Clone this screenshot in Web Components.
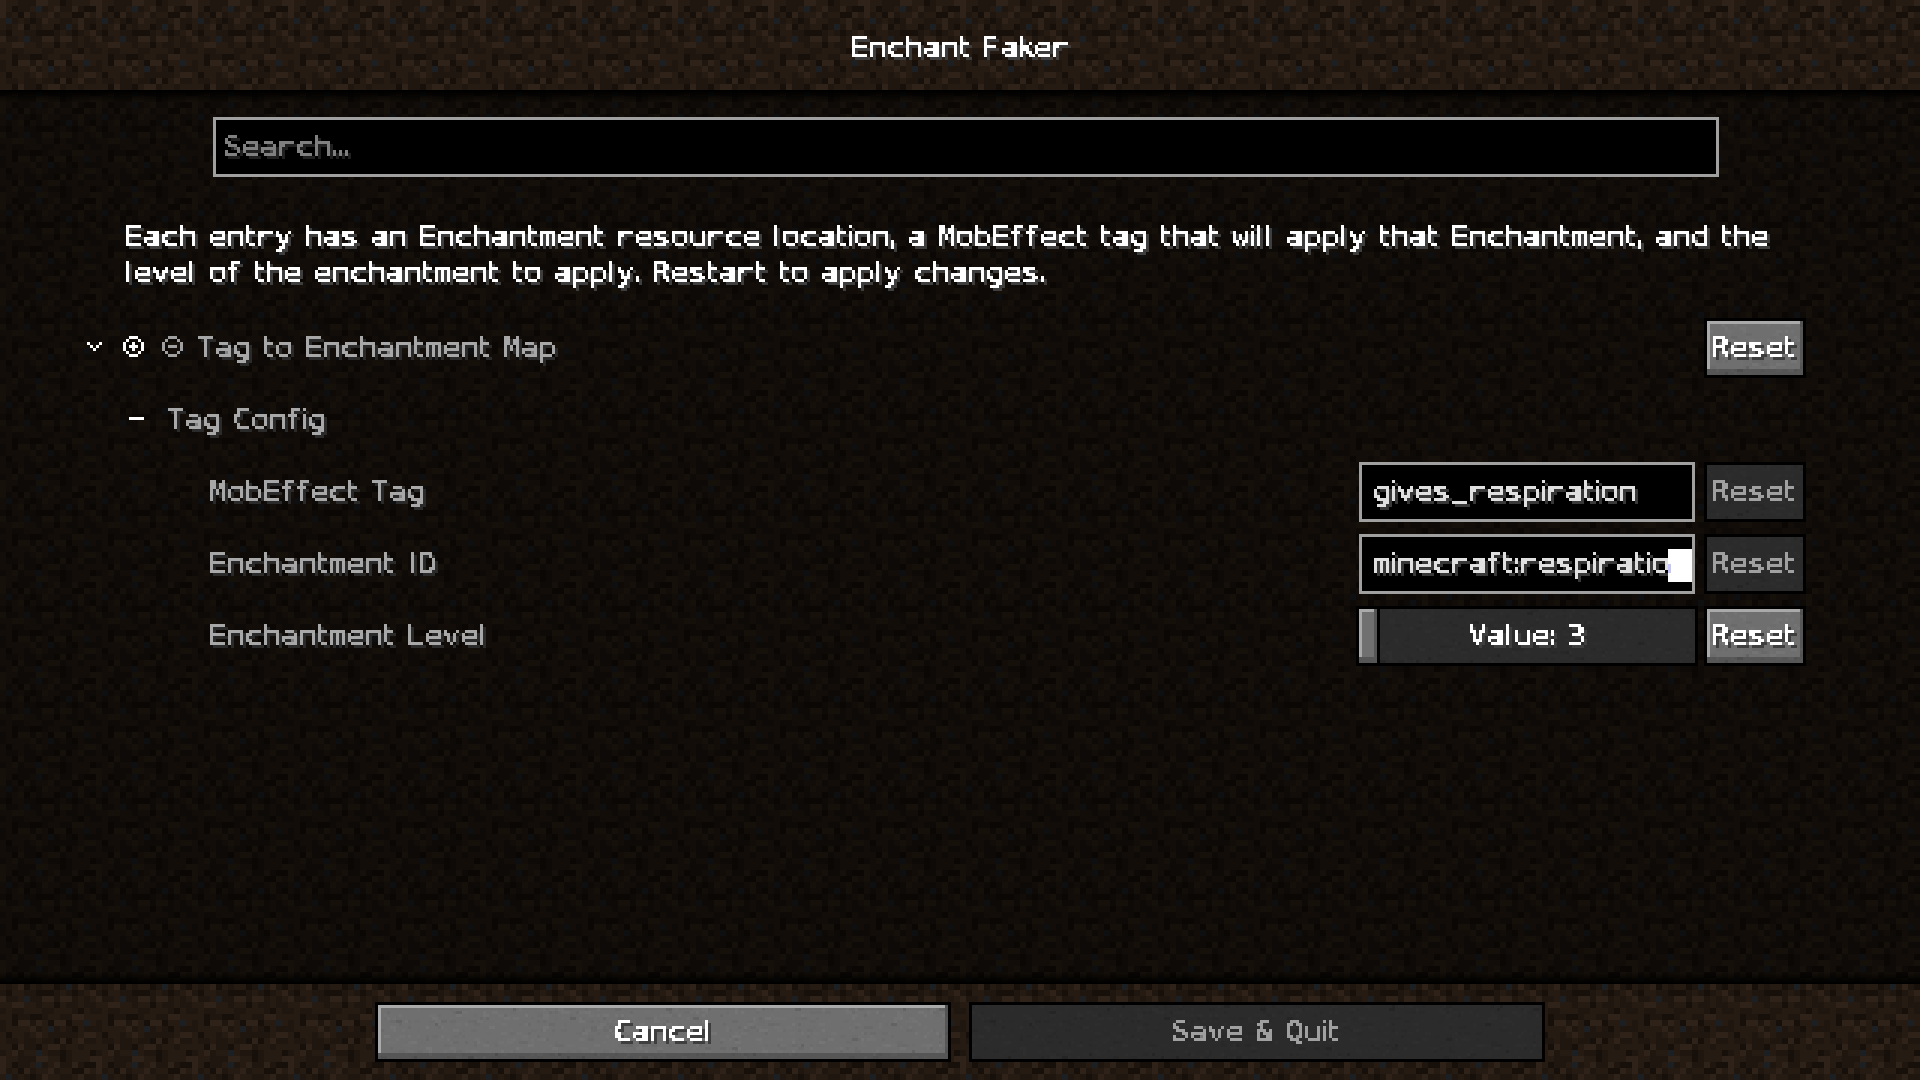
<!DOCTYPE html>
<html lang="en">
<head>
<meta charset="utf-8">
<title>Enchant Faker</title>
<style>
html,body{margin:0;height:100%;background:#000;overflow:hidden}
</style>
</head>
<body>
<config-screen></config-screen>
<script>
/* One GUI pixel is 3 device pixels. */
const U = 3;
const ADV = {' ':4,i:2,l:3,t:4,f:5,k:5,I:4,'.':2,',':2,':':2};
const MONO = 'mMwWCQRVTDS&vy';
const LEFT = {l:0, t:-1.2, f:0, k:0, r:.9, R:.2, F:.3};
const BASE = {_:23, r:27.9};
const SIZE = 27, WIDE = 29, STRETCH = 1.1;
const SANS_FONT = '"DejaVu Sans", sans-serif', MONO_FONT = '"DejaVu Sans Mono", monospace';
const measurer = document.createElement('canvas').getContext('2d');

/* Text set on the GUI grid, each glyph centred in its own cell. */
class McText extends HTMLElement {
  connectedCallback() {
    const text = this.getAttribute('text');
    const fill = this.getAttribute('color') || '#ffffff';
    const shadow = this.getAttribute('shadow') || '#3e3e3e';
    const xs = [], ys = [], runs = [];
    let pen = 0;
    for (const ch of text) {
      const cls = ch === 'r' ? 'm r' : MONO.includes(ch) ? 'm' : '';
      const adv = (ADV[ch] || 6) * U;
      measurer.font = (ch === 'r' ? WIDE : SIZE) * 10 + 'px ' + (cls ? MONO_FONT : SANS_FONT);
      const m = measurer.measureText(ch), k = STRETCH / 10;
      const left = m.actualBoundingBoxLeft * k;
      const w = m.actualBoundingBoxRight * k + left;
      let x = pen;
      if (ch !== ' ') x = pen + left + (ch in LEFT ? LEFT[ch] : (adv - U - w) / 2);
      xs.push((x / STRETCH).toFixed(2));
      ys.push(BASE[ch] || 27);
      const last = runs[runs.length - 1];
      if (last && last.cls === cls) last.s += ch; else runs.push({cls, s: ch});
      pen += adv;
    }
    const esc = s => s.replace(/&/g, '&amp;');
    const body = runs.map(r => r.cls ? `<tspan class="${r.cls}">${esc(r.s)}</tspan>` : esc(r.s)).join('');
    const sh = shadow === 'none' ? '' :
      `<feOffset in="px" dx="3" dy="3" result="off"/><feFlood flood-color="${shadow}"/><feComposite in2="off" operator="in" result="sh"/>
       <feMerge><feMergeNode in="sh"/><feMergeNode in="px"/></feMerge>`;
    this.attachShadow({mode:'open'}).innerHTML = `
      <style>
        :host{display:block;flex:none;height:36px}
        svg{display:block;overflow:visible}
        text{font:${SIZE}px ${SANS_FONT};white-space:pre;stroke-width:.2px;text-rendering:geometricPrecision}
        .m{font-family:${MONO_FONT}}
        .r{font-size:${WIDE}px}
      </style>
      <svg width="${pen}" height="36" viewBox="0 0 ${pen} 36">
        <filter id="f" filterUnits="userSpaceOnUse" x="-6" y="-6" width="${pen + 12}" height="48" color-interpolation-filters="sRGB">
          <feOffset in="SourceGraphic" dx="0" dy="-1" result="up"/>
          <feMerge result="tall"><feMergeNode in="up"/><feMergeNode in="SourceGraphic"/></feMerge>
          <feFlood x="-5" y="-5" width="1" height="1" flood-color="#fff" result="dot"/>
          <feOffset in="dot" x="-6" y="-6" width="3" height="3" dx="0" dy="0"/>
          <feTile result="grid"/>
          <feComposite in="tall" in2="grid" operator="in"/>
          <feComponentTransfer><feFuncA type="linear" slope="40" intercept="-20"/></feComponentTransfer>
          <feMorphology operator="dilate" radius="1" result="px"/>
          ${sh}
        </filter>
        <g filter="url(#f)"><text xml:space="preserve" transform="scale(${STRETCH} 1)" y="${ys.join(' ')}" x="${xs.join(' ')}" fill="${fill}" stroke="${fill}">${body}</text></g>
      </svg>`;
  }
}
customElements.define('mc-text', McText);

const DIRT = [
 '4332224433123334','431223b234224211','4231423342331143','3b23212433223422',
 '32341323312b2421','2133221112321234','4223b22442442323','3344332331322322',
 '2322333223332132','3312211233224433','23144243144133b3','23333423b2321322',
 '3133234322222344','3223223221413422','3314221344233233','234233b322123331'];
const LIGHT = {1:'#170f0a',2:'#1f160f',3:'#261b13',4:'#2f2219',b:'#1d2022'};
const DARK  = {1:'#0a0705',2:'#0e0a07',3:'#120d08',4:'#16100b',b:'#0d0f10'};

/* Tiled dirt backdrop; "top" keeps the tiling continuous between bands. */
class DirtPanel extends HTMLElement {
  connectedCallback() {
    const h = +this.getAttribute('h'), top = +this.getAttribute('top');
    const pal = this.hasAttribute('dark') ? DARK : LIGHT;
    this.attachShadow({mode:'open'}).innerHTML = `
      <style>
        :host{display:grid;height:${h}px;overflow:hidden}
        canvas,.in{grid-area:1/1;min-width:0}
        canvas{display:block}
        .in{z-index:1;display:flex;flex-direction:column}
        :host([dark]) .in{background:linear-gradient(#000,transparent) top/100% 12px no-repeat,linear-gradient(transparent,#000) bottom/100% 12px no-repeat}
      </style>
      <canvas width="1920" height="${h}"></canvas><div class="in"><slot></slot></div>`;
    const c = this.shadowRoot.querySelector('canvas').getContext('2d');
    for (let y = 0; y < h; y += 6) for (let x = 0; x < 1920; x += 6) {
      c.fillStyle = pal[DIRT[((y + top) / 6) % 16][(x / 6) % 16]];
      c.fillRect(x, y, 6, 6);
    }
  }
}
customElements.define('dirt-panel', DirtPanel);

/* Speckled stone fill. */
function stone(cv, base, amp) {
  const c = cv.getContext('2d');
  let s = 7919;
  const rnd = () => {
    s = (s + 0x6D2B79F5) | 0;
    let t = Math.imul(s ^ (s >>> 15), 1 | s);
    t = (t + Math.imul(t ^ (t >>> 7), 61 | t)) ^ t;
    return ((t ^ (t >>> 14)) >>> 0) / 4294967296;
  };
  c.fillStyle = `rgb(${base},${base},${base})`;
  c.fillRect(0, 0, cv.width, cv.height);
  const n = cv.width * cv.height / 30;
  for (let i = 0; i < n; i++) {
    const x = Math.floor(rnd() * cv.width / 3) * 3, y = Math.floor(rnd() * cv.height / 3) * 3;
    const r = rnd(), v = Math.round(base + (r < .02 ? -2 : r * 2 - 1) * amp);
    c.fillStyle = `rgb(${v},${v},${v})`;
    c.fillRect(x, y, rnd() < .4 ? 6 : 3, 3);
  }
}

class McButton extends HTMLElement {
  connectedCallback() {
    const w = +this.getAttribute('w'), off = this.hasAttribute('disabled');
    this.attachShadow({mode:'open'}).innerHTML = `
      <style>
        :host{display:grid;flex:none;box-sizing:border-box;width:${w}px;height:60px;border:3px solid #000}
        canvas,.face{grid-area:1/1}
        canvas{display:block}
        .face{z-index:1;display:flex;align-items:center;justify-content:center}
        mc-text{margin-left:var(--nudge,0px)}
      </style>
      <canvas width="${w - 6}" height="54"></canvas>
      <div class="face"><mc-text text="${this.getAttribute('label').replace('&','&amp;')}"
        color="${off ? '#a0a0a0' : '#ffffff'}" shadow="${off ? 'none' : '#3e3e3e'}"></mc-text></div>`;
    const cv = this.shadowRoot.querySelector('canvas');
    stone(cv, off ? 43 : 111, off ? 3 : 6);
    if (!off) {
      const c = cv.getContext('2d'), W = w - 6;
      c.fillStyle = '#00000038'; c.fillRect(0, 48, W, 6); c.fillRect(W - 3, 0, 3, 48);
      c.fillStyle = '#aaaaaa'; c.fillRect(0, 0, W - 3, 3); c.fillRect(0, 0, 3, 48);
    }
  }
}
customElements.define('mc-button', McButton);

class McField extends HTMLElement {
  connectedCallback() {
    this.attachShadow({mode:'open'}).innerHTML = `
      <style>
        :host{display:flex;align-items:center;flex:none;box-sizing:border-box;width:${this.getAttribute('w')}px;height:60px;
          border:3px solid #a0a0a0;background:#000;padding-left:${this.getAttribute('pad')}px;position:relative}
        .sel{position:absolute;right:0;top:12px;width:24px;height:33px;background:linear-gradient(#c6c6ff,#c6c6ff) 0 15px/3px 9px no-repeat #fff}
      </style>
      <mc-text text="${this.getAttribute('value')}" color="${this.getAttribute('color')}" shadow="${this.getAttribute('shadow')}"></mc-text>
      ${this.hasAttribute('selected') ? '<div class="sel"></div>' : ''}`;
  }
}
customElements.define('mc-field', McField);

class McSlider extends HTMLElement {
  connectedCallback() {
    this.attachShadow({mode:'open'}).innerHTML = `
      <style>
        :host{display:grid;flex:none;box-sizing:border-box;width:342px;height:60px;border:3px solid #000}
        canvas,.face{grid-area:1/1}
        canvas{display:block}
        .face{z-index:1;display:flex;align-items:center;justify-content:center}
        mc-text{margin-left:3px}
      </style>
      <canvas width="336" height="54"></canvas>
      <div class="face"><mc-text text="Value: 3"></mc-text></div>`;
    const cv = this.shadowRoot.querySelector('canvas');
    stone(cv, 43, 3);
    const c = cv.getContext('2d');
    for (const [f, x, y, w, h] of [['#000',18,0,3,54],['#707070',0,0,18,54],['#565656',0,48,18,6],['#565656',15,0,3,48],['#aaa',0,0,15,3],['#aaa',0,0,3,48]]) {
      c.fillStyle = f; c.fillRect(x, y, w, h);
    }
  }
}
customElements.define('mc-slider', McSlider);

/* Icons drawn from rows of GUI pixels. */
const ICONS = {
  down: ['#...#','.#.#.','..#..'],
  plus: ['..###..','.#...#.','#..#..#','#.###.#','#..#..#','.#...#.','..###..'],
  minus:['..###..','.#...#.','#.....#','#.###.#','#.....#','.#...#.','..###..'],
  dash: ['#####']
};
class McIcon extends HTMLElement {
  connectedCallback() {
    const rows = ICONS[this.getAttribute('name')], w = rows[0].length;
    let d = '';
    rows.forEach((r, y) => [...r].forEach((p, x) => { if (p === '#') d += `M${x} ${y}h1v1h-1z`; }));
    this.attachShadow({mode:'open'}).innerHTML = `
      <style>:host{display:block;flex:none;margin-bottom:3px;color:#fff}svg{display:block}</style>
      <svg width="${w * 3}" height="${rows.length * 3}" viewBox="0 0 ${w} ${rows.length}" shape-rendering="crispEdges"><path d="${d}" fill="currentColor"/></svg>`;
  }
}
customElements.define('mc-icon', McIcon);

class ConfigRow extends HTMLElement {
  connectedCallback() {
    this.attachShadow({mode:'open'}).innerHTML = `
      <style>
        :host{display:flex;align-items:center;height:60px;padding:0 114px 0 ${this.getAttribute('indent')}px}
        .end{margin-left:auto;display:flex;align-items:center}
      </style>
      <slot name="icon"></slot>
      <mc-text text="${this.getAttribute('label')}" color="#a8a8a8" shadow="#2a2a2a"></mc-text>
      <div class="end"><slot></slot></div>`;
  }
}
customElements.define('config-row', ConfigRow);

class ConfigScreen extends HTMLElement {
  connectedCallback() {
    this.attachShadow({mode:'open'}).innerHTML = `
      <style>
        :host{display:flex;flex-direction:column;width:1920px;height:1080px}
        .title{display:flex;justify-content:center;padding:30px 0 0 3px}
        .search{margin:27px 0 42px 213px}
        .about{padding-left:126px;margin-bottom:27px}
        .rows{display:flex;flex-direction:column;gap:12px}
        .foot{display:flex;gap:18px;padding:18px 0 0 375px}
        .wide{--nudge:3px}
        .f{margin-right:9px}
        .s{margin-right:6px}
      </style>
      <dirt-panel h="90" top="0"><div class="title"><mc-text text="Enchant Faker"></mc-text></div></dirt-panel>
      <dirt-panel h="894" top="90" dark>
        <mc-field class="search" w="1506" pad="9" value="Search..." color="#808080" shadow="#202020"></mc-field>
        <div class="about">
          <mc-text text="Each entry has an Enchantment resource location, a MobEffect tag that will apply that Enchantment, and the"></mc-text>
          <mc-text text="level of the enchantment to apply. Restart to apply changes."></mc-text>
        </div>
        <div class="rows">
          <config-row indent="87" label="Tag to Enchantment Map">
            <mc-icon slot="icon" name="down" style="margin-right:21px"></mc-icon>
            <mc-icon slot="icon" name="plus" style="margin-right:18px"></mc-icon>
            <mc-icon slot="icon" name="minus" style="margin-right:15px;color:#a0a0a0"></mc-icon>
            <mc-button w="102" label="Reset"></mc-button>
          </config-row>
          <config-row indent="129" label="Tag Config"><mc-icon slot="icon" name="dash" style="margin-right:24px"></mc-icon></config-row>
          <config-row indent="210" label="MobEffect Tag">
            <mc-field class="f" w="336" pad="12" value="gives_respiration" color="#e0e0e0" shadow="#383838"></mc-field>
            <mc-button w="102" label="Reset" disabled></mc-button>
          </config-row>
          <config-row indent="210" label="Enchantment ID">
            <mc-field class="f" w="336" pad="12" value="minecraft:respiratio" color="#e0e0e0" shadow="#383838" selected></mc-field>
            <mc-button w="102" label="Reset" disabled></mc-button>
          </config-row>
          <config-row indent="210" label="Enchantment Level">
            <mc-slider class="s"></mc-slider>
            <mc-button w="102" label="Reset"></mc-button>
          </config-row>
        </div>
      </dirt-panel>
      <dirt-panel h="96" top="984"><div class="foot">
        <mc-button class="wide" w="576" label="Cancel"></mc-button>
        <mc-button w="576" label="Save &amp; Quit" disabled></mc-button>
      </div></dirt-panel>`;
  }
}
customElements.define('config-screen', ConfigScreen);
</script>
</body>
</html>
